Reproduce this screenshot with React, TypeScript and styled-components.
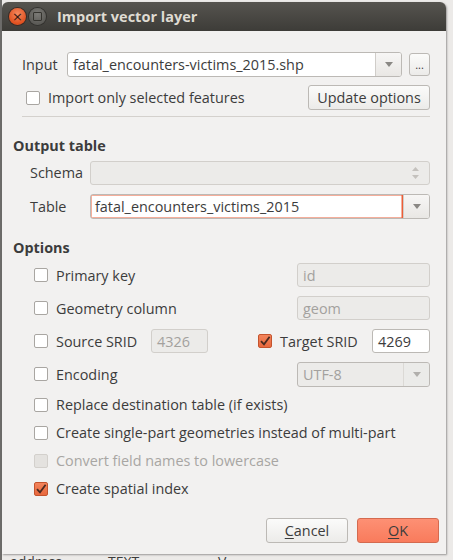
import styled, { createGlobalStyle } from "styled-components";

const GlobalStyle = createGlobalStyle`
  body {
    margin: 0;
    background: #e4e3e1;
    font-family: "Open Sans", "DejaVu Sans", sans-serif;
    font-size: 14.4px;
    color: #3c3c3c;
  }
`;

const CheckIcon = () => (
  <svg width="12" height="12" viewBox="0 0 12 12">
    <path d="M2 6.2 L5 9.4 L10.6 1.8" stroke="#4a2a20" strokeWidth="1.8" fill="none" />
  </svg>
);

const Arrow = () => (
  <svg width="8" height="5" viewBox="0 0 8 5">
    <path d="M0 0 L8 0 L4 5 Z" fill="#8a8884" />
  </svg>
);

const SpinArrows = () => (
  <svg width="7" height="12" viewBox="0 0 7 12">
    <path d="M0 4 L7 4 L3.5 0 Z M0 8 L7 8 L3.5 12 Z" fill="#c4c1bd" />
  </svg>
);

const Check = ({ checked, disabled }: { checked?: boolean; disabled?: boolean }) => (
  <CheckBox $checked={checked} $disabled={disabled}>
    {checked && <CheckIcon />}
  </CheckBox>
);

const App = () => {
  return (
    <Page>
      <GlobalStyle />
      <Window>
        <TitleBar>
          <CloseButton>×</CloseButton>
          <MaxButton>
            <MaxSquare />
          </MaxButton>
          <Title>Import vector layer</Title>
        </TitleBar>
        <Body>
          <TopSection>
            <Row>
              <InputLabel>Input</InputLabel>
              <Combo $width={335}>
                <ComboText>fatal_encounters-victims_2015.shp</ComboText>
                <ComboButton>
                  <Arrow />
                </ComboButton>
              </Combo>
              <SmallButton>...</SmallButton>
            </Row>
            <Row $top={8}>
              <CheckIndent>
                <Check />
              </CheckIndent>
              <CheckLabel>Import only selected features</CheckLabel>
              <PushButton $width={122}>Update options</PushButton>
            </Row>
            <Separator />
          </TopSection>

          <GroupTitle $top={20}>Output table</GroupTitle>
          <Group>
            <Row $top={5}>
              <FieldLabel>Schema</FieldLabel>
              <Field $width={340} $disabled>
                <span />
                <SpinWrap>
                  <SpinArrows />
                </SpinWrap>
              </Field>
            </Row>
            <Row $top={9}>
              <FieldLabel>Table</FieldLabel>
              <Combo $width={340}>
                <ComboText $focus>fatal_encounters_victims_2015</ComboText>
                <ComboButton>
                  <Arrow />
                </ComboButton>
              </Combo>
            </Row>
          </Group>

          <GroupTitle $top={20}>Options</GroupTitle>
          <Options>
            <OptionRow>
              <Check />
              <OptionText>Primary key</OptionText>
              <Field $width={133} $disabled $push>
                id
              </Field>
            </OptionRow>
            <OptionRow>
              <Check />
              <OptionText>Geometry column</OptionText>
              <Field $width={133} $disabled $push>
                geom
              </Field>
            </OptionRow>
            <OptionRow>
              <Check />
              <OptionText $width={95}>Source SRID</OptionText>
              <Field $width={57} $disabled>
                4326
              </Field>
              <TargetGroup>
                <Check checked />
                <OptionText $width={92}>Target SRID</OptionText>
                <Field $width={58}>4269</Field>
              </TargetGroup>
            </OptionRow>
            <OptionRow>
              <Check />
              <OptionText>Encoding</OptionText>
              <Combo $width={133} $disabled $push>
                <ComboText $disabled>UTF-8</ComboText>
                <ComboButton $disabled>
                  <Arrow />
                </ComboButton>
              </Combo>
            </OptionRow>
            <OptionRow $short>
              <Check />
              <OptionText>Replace destination table (if exists)</OptionText>
            </OptionRow>
            <OptionRow $short>
              <Check />
              <OptionText>Create single-part geometries instead of multi-part</OptionText>
            </OptionRow>
            <OptionRow $short>
              <Check disabled />
              <OptionText $disabled>Convert field names to lowercase</OptionText>
            </OptionRow>
            <OptionRow $short>
              <Check checked />
              <OptionText>Create spatial index</OptionText>
            </OptionRow>
          </Options>

          <ButtonBar>
            <DialogButton>
              <u>C</u>ancel
            </DialogButton>
            <DialogButton $primary>
              <u>O</u>K
            </DialogButton>
          </ButtonBar>
        </Body>
      </Window>
      <Behind>
        <BehindCell $width={98}>address</BehindCell>
        <BehindCell $width={110}>TEXT</BehindCell>
        <BehindCell $width={40}>V</BehindCell>
      </Behind>
    </Page>
  );
};

const Page = styled.div`
  width: 453px;
  height: 560px;
  overflow: hidden;
  background: linear-gradient(90deg, #6d6c6a 0px, #6d6c6a 2px, #eceae8 2px);
`;

const Window = styled.div`
  width: 444px;
  margin: 2px 0 0 2px;
  display: flex;
  flex-direction: column;
  box-shadow: 1px 1px 2px rgba(0, 0, 0, 0.35);
  border-radius: 6px 6px 0 0;
`;

const TitleBar = styled.div`
  height: 29px;
  display: flex;
  align-items: center;
  padding-left: 7px;
  gap: 3px;
  border-radius: 6px 6px 0 0;
  background: linear-gradient(#56544f, #3d3c38);
`;

const CloseButton = styled.div`
  width: 17px;
  height: 17px;
  border-radius: 50%;
  background: radial-gradient(circle at 50% 35%, #f58a60, #e0501f 70%);
  color: #3a1a10;
  font: 13px/17px "DejaVu Sans", sans-serif;
  text-align: center;
  box-shadow: 0 0 0 1px #3a2a24;
`;

const MaxButton = styled.div`
  width: 17px;
  height: 17px;
  border-radius: 50%;
  background: radial-gradient(circle at 50% 35%, #7c7b77, #5c5b57 70%);
  display: flex;
  align-items: center;
  justify-content: center;
  box-shadow: 0 0 0 1px #33322f;
`;

const MaxSquare = styled.div`
  width: 7px;
  height: 7px;
  border: 1px solid #35342f;
  border-radius: 1px;
`;

const Title = styled.div`
  margin-left: 8px;
  color: #dfdbd2;
  font-weight: 700;
  font-size: 14.5px;
`;

const Body = styled.div`
  height: 523px;
  background: #f2f1f0;
  display: flex;
  flex-direction: column;
`;

const TopSection = styled.div`
  padding: 21px 16px 0 20px;
`;

const Row = styled.div<{ $top?: number }>`
  display: flex;
  align-items: center;
  height: 25px;
  margin-top: ${(p) => p.$top ?? 0}px;
`;

const InputLabel = styled.div`
  width: 45px;
`;

const CheckIndent = styled.div`
  padding-left: 4px;
`;

const CheckLabel = styled.div`
  margin-left: 8px;
  flex: 1;
`;

const Separator = styled.div`
  margin-top: 6px;
  height: 1px;
  background: #d4d1cd;
`;

const GroupTitle = styled.div<{ $top: number }>`
  margin: ${(p) => p.$top}px 0 0 11px;
  line-height: 18px;
  font-weight: 700;
`;

const Group = styled.div`
  padding: 0 16px 0 28px;
`;

const FieldLabel = styled.div`
  width: 60px;
`;

const Combo = styled.div<{ $width: number; $disabled?: boolean; $push?: boolean }>`
  width: ${(p) => p.$width}px;
  height: 25px;
  box-sizing: border-box;
  display: flex;
  border: 1px solid #bcb9b5;
  border-radius: 3px;
  background: ${(p) => (p.$disabled ? "#ecebe9" : "#ffffff")};
  margin-left: ${(p) => (p.$push ? "auto" : "0")};
  overflow: hidden;
`;

const ComboText = styled.div<{ $focus?: boolean; $disabled?: boolean }>`
  flex: 1;
  display: flex;
  align-items: center;
  padding-left: 5px;
  color: ${(p) => (p.$disabled ? "#a3a19e" : "#3c3c3c")};
  box-shadow: ${(p) => (p.$focus ? "inset 0 0 0 1.5px #eb5e38" : "none")};
  border-radius: 2px 0 0 2px;
  margin: ${(p) => (p.$focus ? "-1px 0 -1px -1px" : "0")};
`;

const ComboButton = styled.div<{ $disabled?: boolean }>`
  width: 25px;
  display: flex;
  align-items: center;
  justify-content: center;
  border-left: 1px solid #d0cdc9;
  background: ${(p) => (p.$disabled ? "#ecebe9" : "linear-gradient(#f7f6f5, #e9e7e4)")};
  opacity: ${(p) => (p.$disabled ? 0.6 : 1)};
`;

const SmallButton = styled.div`
  width: 21px;
  height: 23px;
  margin-left: 7px;
  box-sizing: border-box;
  border: 1px solid #bcb9b5;
  border-radius: 3px;
  background: linear-gradient(#fbfbfa, #ecebe9);
  display: flex;
  align-items: center;
  justify-content: center;
  font-size: 11px;
  line-height: 1;
`;

const PushButton = styled.div<{ $width: number }>`
  width: ${(p) => p.$width}px;
  height: 25px;
  box-sizing: border-box;
  border: 1px solid #bcb9b5;
  border-radius: 3px;
  background: linear-gradient(#fbfbfa, #ecebe9);
  display: flex;
  align-items: center;
  justify-content: center;
`;

const Field = styled.div<{ $width: number; $disabled?: boolean; $push?: boolean }>`
  width: ${(p) => p.$width}px;
  height: 24px;
  box-sizing: border-box;
  display: flex;
  align-items: center;
  justify-content: space-between;
  padding: 0 4px 0 5px;
  border: 1px solid ${(p) => (p.$disabled ? "#d2cfcb" : "#bcb9b5")};
  border-radius: 3px;
  background: ${(p) => (p.$disabled ? "#ecebe9" : "#ffffff")};
  color: ${(p) => (p.$disabled ? "#a3a19e" : "#3c3c3c")};
  margin-left: ${(p) => (p.$push ? "auto" : "0")};
`;

const SpinWrap = styled.div`
  display: flex;
  margin-right: 6px;
`;

const Options = styled.div`
  margin-top: 6px;
  padding: 0 16px 0 32px;
  display: flex;
  flex-direction: column;
  gap: 9px;
`;

const OptionRow = styled.div<{ $short?: boolean }>`
  display: flex;
  align-items: center;
  height: ${(p) => (p.$short ? 19 : 24)}px;
`;

const OptionText = styled.div<{ $width?: number; $disabled?: boolean }>`
  margin-left: 8px;
  width: ${(p) => (p.$width ? `${p.$width}px` : "auto")};
  color: ${(p) => (p.$disabled ? "#a8a6a3" : "#3c3c3c")};
  white-space: nowrap;
`;

const TargetGroup = styled.div`
  margin-left: auto;
  display: flex;
  align-items: center;
`;

const CheckBox = styled.div<{ $checked?: boolean; $disabled?: boolean }>`
  width: 14px;
  height: 14px;
  box-sizing: border-box;
  flex-shrink: 0;
  border-radius: 2px;
  display: flex;
  align-items: center;
  justify-content: center;
  border: 1px solid ${(p) => (p.$checked ? "#c4532d" : p.$disabled ? "#d3d0cc" : "#a9a6a2")};
  background: ${(p) =>
    p.$checked ? "linear-gradient(#f3845b, #e8683d)" : p.$disabled ? "#e4e2df" : "#ffffff"};
`;

const ButtonBar = styled.div`
  margin-top: auto;
  padding: 0 7px 11px 0;
  display: flex;
  justify-content: flex-end;
  gap: 9px;
`;

const DialogButton = styled.div<{ $primary?: boolean }>`
  width: 82px;
  height: 25px;
  box-sizing: border-box;
  border-radius: 3px;
  display: flex;
  align-items: center;
  justify-content: center;
  border: 1px solid ${(p) => (p.$primary ? "#d46a4f" : "#bcb9b5")};
  background: ${(p) =>
    p.$primary ? "linear-gradient(#fd9074, #f97b5c)" : "linear-gradient(#fbfbfa, #ecebe9)"};
  color: #3c3c3c;

  u {
    text-decoration-thickness: 1px;
    text-underline-offset: 2px;
  }
`;

const Behind = styled.div`
  display: flex;
  height: 6px;
  overflow: hidden;
  padding-left: 10px;
  margin-top: 1px;
`;

const BehindCell = styled.div<{ $width: number }>`
  width: ${(p) => p.$width}px;
  font-size: 14px;
  line-height: 14px;
  color: #3c3c3c;
  margin-top: 0px;
`;

export default App;
